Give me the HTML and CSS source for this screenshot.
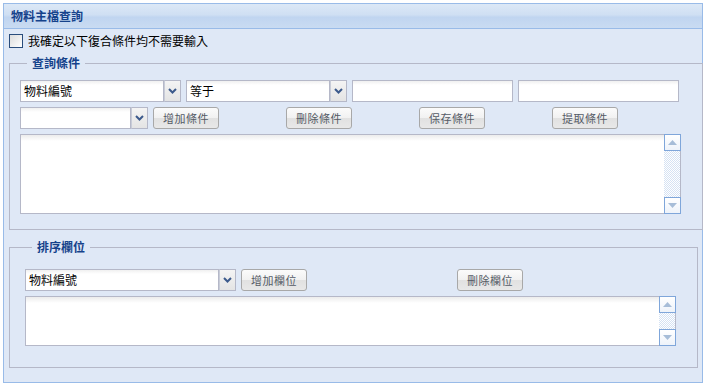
FILE: index.html
```html
<!DOCTYPE html>
<html lang="zh-Hant">
<head>
<meta charset="utf-8">
<title>物料主檔查詢</title>
<link rel="stylesheet" href="styles.css">
</head>
<body>
<div class="panel">
  <div class="panel-header">物料主檔查詢</div>
  <div class="panel-body">
    <label class="check-row"><span class="checkbox"></span><span>我確定以下復合條件均不需要輸入</span></label>

    <fieldset class="fs fs-query">
      <legend>查詢條件</legend>
      <div class="row">
        <div class="combo w161"><div class="combo-input">物料編號</div><div class="trigger"><svg width="9" height="6" viewBox="0 0 9 6"><path d="M1 1 L4.5 4.5 L8 1" fill="none" stroke="#3c5a8c" stroke-width="2"/></svg></div></div>
        <div class="combo w161"><div class="combo-input">等于</div><div class="trigger"><svg width="9" height="6" viewBox="0 0 9 6"><path d="M1 1 L4.5 4.5 L8 1" fill="none" stroke="#3c5a8c" stroke-width="2"/></svg></div></div>
        <div class="text w161"></div>
        <div class="text w161"></div>
      </div>
      <div class="row row-btns">
        <div class="combo w128"><div class="combo-input"></div><div class="trigger"><svg width="9" height="6" viewBox="0 0 9 6"><path d="M1 1 L4.5 4.5 L8 1" fill="none" stroke="#3c5a8c" stroke-width="2"/></svg></div></div>
        <div class="cell"><button class="btn">增加條件</button></div>
        <div class="cell"><button class="btn">刪除條件</button></div>
        <div class="cell"><button class="btn">保存條件</button></div>
        <div class="cell"><button class="btn">提取條件</button></div>
      </div>
      <div class="area area-big">
        <div class="area-content"></div>
        <div class="sbar">
          <div class="sbtn"><svg width="9" height="5" viewBox="0 0 9 5"><path d="M0 5 L4.5 0 L9 5Z" fill="#a7bdd8"/></svg></div>
          <div class="strack"></div>
          <div class="sbtn"><svg width="9" height="5" viewBox="0 0 9 5"><path d="M0 0 L4.5 5 L9 0Z" fill="#a7bdd8"/></svg></div>
        </div>
      </div>
    </fieldset>

    <fieldset class="fs fs-sort">
      <legend>排序欄位</legend>
      <div class="row row-sort">
        <div class="combo w211"><div class="combo-input">物料編號</div><div class="trigger"><svg width="9" height="6" viewBox="0 0 9 6"><path d="M1 1 L4.5 4.5 L8 1" fill="none" stroke="#3c5a8c" stroke-width="2"/></svg></div></div>
        <div class="cell cell-sort"><button class="btn">增加欄位</button></div>
        <div class="cell"><button class="btn">刪除欄位</button></div>
      </div>
      <div class="area area-small">
        <div class="area-content"></div>
        <div class="sbar">
          <div class="sbtn"><svg width="9" height="5" viewBox="0 0 9 5"><path d="M0 5 L4.5 0 L9 5Z" fill="#a7bdd8"/></svg></div>
          <div class="strack"></div>
          <div class="sbtn"><svg width="9" height="5" viewBox="0 0 9 5"><path d="M0 0 L4.5 5 L9 0Z" fill="#a7bdd8"/></svg></div>
        </div>
      </div>
    </fieldset>
  </div>
</div>
</body>
</html>
```

FILE: styles.css
```css
* { box-sizing: border-box; }
html, body { margin: 0; padding: 0; background: #ffffff; }
body {
  padding: 3px;
  font-family: "Noto Sans CJK TC", "Noto Sans CJK SC", sans-serif;
  font-size: 12px;
  color: #000;
}
.panel {
  width: 700px;
  height: 380px;
  border: 1px solid #99bbe8;
  background: #dfe8f6;
  display: flex;
  flex-direction: column;
}
.panel-header {
  height: 25px;
  border-bottom: 1px solid #99bbe8;
  background: linear-gradient(#dce8f6 0%, #cfdff3 45%, #c0d5f0 55%, #c9dbf2 100%);
  color: #15428b;
  font-weight: bold;
  font-size: 12px;
  line-height: 24px;
  padding-left: 7px;
}
.panel-body {
  padding: 5px 4px 0 5px;
  display: flex;
  flex-direction: column;
}
.check-row {
  display: flex;
  align-items: center;
  gap: 5px;
  height: 14px;
  line-height: 14px;
  font-size: 12px;
}
.checkbox {
  width: 14px;
  height: 14px;
  border: 1px solid #2a4d7c;
  background: linear-gradient(135deg, #dcdcdc, #ffffff);
}
.fs {
  margin: 8px 0 0 0;
  border: 1px solid #b5b8c8;
  padding: 0;
  width: 689px;
}
.fs legend {
  color: #15428b;
  font-weight: bold;
  font-size: 12px;
  line-height: 14px;
  padding: 0 5px;
  margin-left: 7px;
}
.fs-query { padding: 10px 17px 15px 10px; }
.fs-sort { margin-top: 10px; padding: 15px 21px 21px 15px; }
.row { display: flex; gap: 5px; height: 22px; }
.row-btns { gap: 0; margin-top: 5px; }
.row-btns .combo { margin-right: 5px; }
.cell { width: 133px; display: flex; }
.row-sort { gap: 0; }
.row-sort .combo { margin-right: 5px; }
.cell-sort { width: 216px; }
.combo, .text { height: 22px; display: flex; }
.w161 { width: 161px; }
.w128 { width: 128px; }
.w211 { width: 211px; }
.combo-input, .text {
  border: 1px solid #b5b8c8;
  background: linear-gradient(#f0f0f0 0, #ffffff 4px, #ffffff 100%);
}
.combo-input {
  flex: 1;
  padding-left: 3px;
  line-height: 20px;
  font-size: 12px;
  white-space: nowrap;
  overflow: hidden;
}
.trigger {
  width: 17px;
  border: 1px solid #b5b8c8;
  border-left: 1px solid #c8ccd8;
  background: linear-gradient(#f4f4f4, #e4e4e4);
  display: flex;
  align-items: center;
  justify-content: center;
}
.btn {
  width: 66px;
  height: 22px;
  border: 1px solid #a8a8a8;
  border-radius: 3px;
  background: linear-gradient(#fbfbfb 0%, #f1f1f1 50%, #e1e1e1 51%, #e8e8e8 100%);
  font-family: "Noto Sans CJK TC", "Noto Sans CJK SC", sans-serif;
  font-size: 11px;
  color: #555b66;
  padding: 0;
  line-height: 20px;
  letter-spacing: 0.5px;
}
.area {
  display: flex;
  border: 1px solid #b5b8c8;
  margin-top: 5px;
  background: linear-gradient(#ececec 0, #ffffff 6px, #ffffff 100%);
}
.area-big { width: 661px; height: 80px; }
.area-small { width: 651px; height: 50px; }
.area-content { flex: 1; }
.sbar {
  width: 17px;
  margin: -1px -1px -1px 0;
  display: flex;
  flex-direction: column;
}
.sbtn {
  height: 17px;
  border: 1px solid #7fa6da;
  background: linear-gradient(#ffffff, #eef3fa);
  display: flex;
  align-items: center;
  justify-content: center;
  flex-shrink: 0;
}
.strack {
  flex: 1;
  border-right: 1px solid #b5b8c8;
  background: repeating-conic-gradient(#d5e2f3 0 25%, #ffffff 0 50%) 0 0 / 2px 2px;
}
```
